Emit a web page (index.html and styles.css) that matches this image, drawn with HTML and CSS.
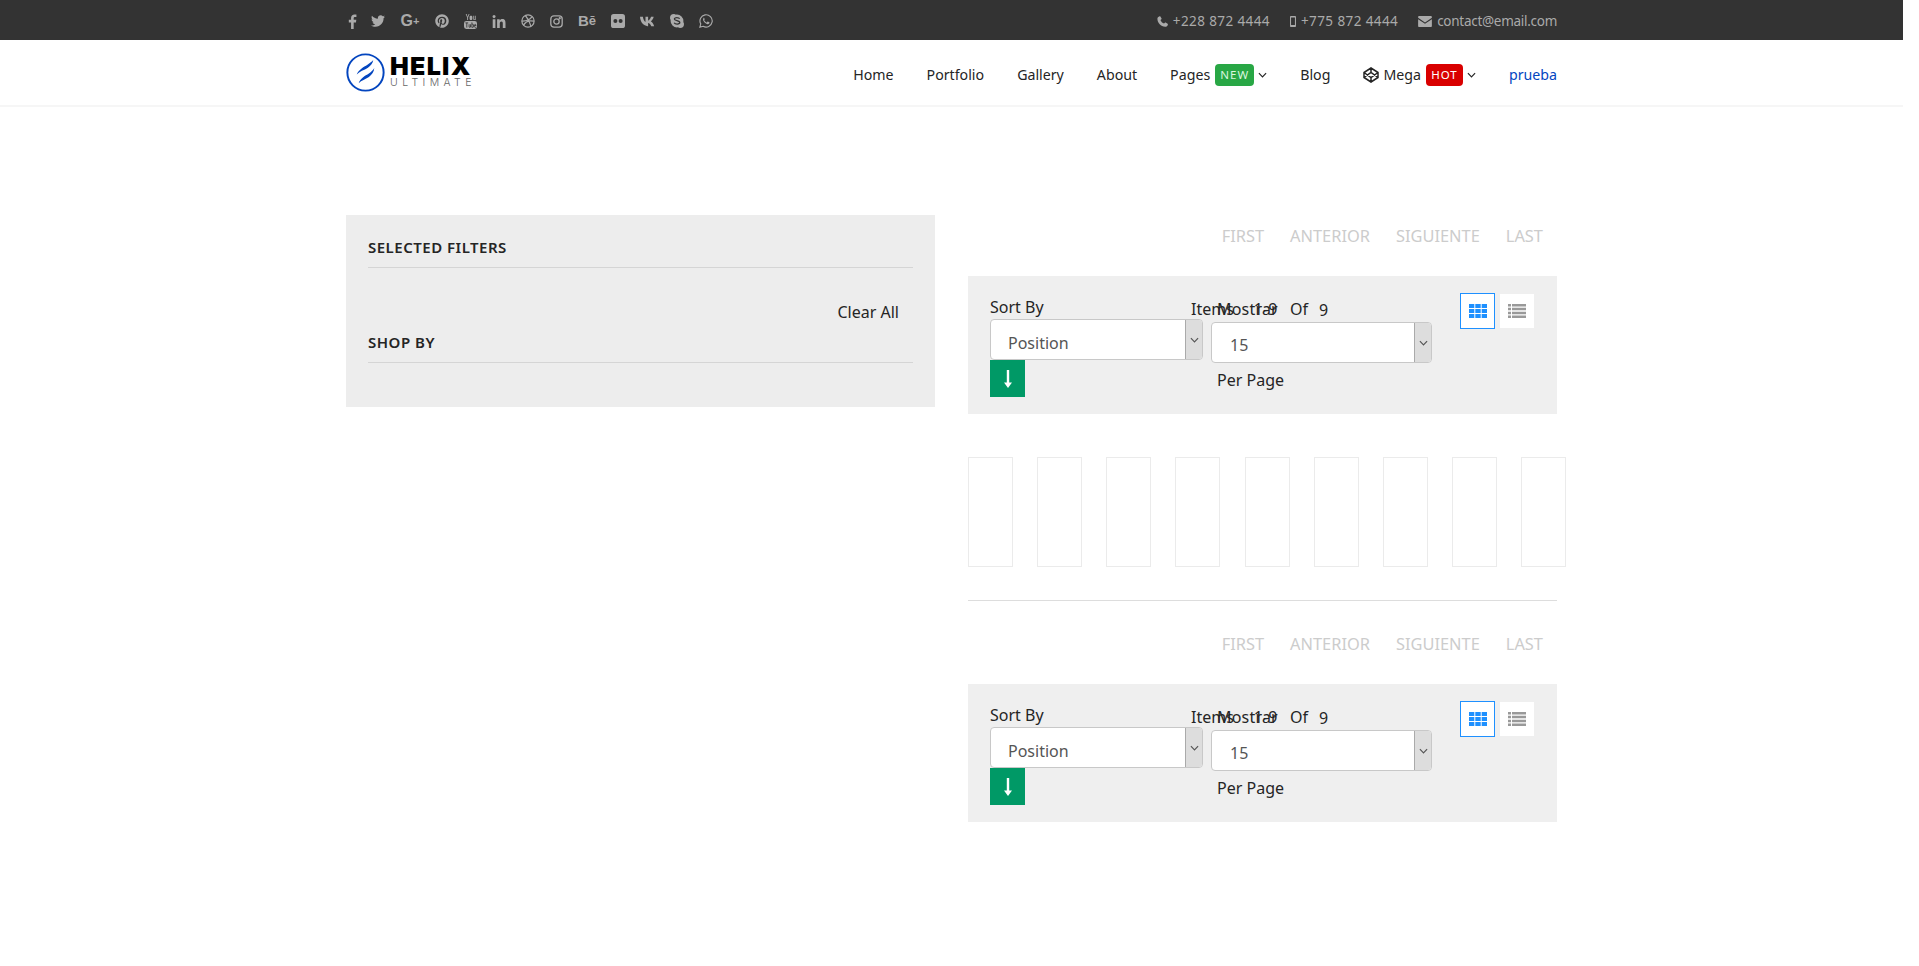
FILE: index.html
```html
<!DOCTYPE html>
<html lang="en">
<head>
<meta charset="utf-8">
<title>Helix Ultimate</title>
<link rel="stylesheet" href="styles.css">
</head>
<body>
<svg class="defs" width="0" height="0" aria-hidden="true">
  <symbol id="chev" viewBox="0 0 10 6"><path d="M1 1l4 4 4-4" fill="none" stroke="currentColor" stroke-width="1.3"/></symbol>
  <symbol id="grid" viewBox="0 0 18 14"><path fill="#1e90ff" d="M0 0h5.300v4H0zM6.300 0h5.400v4H6.300zM12.700 0H18v4h-5.300zM0 5h5.300v4H0zM6.300 5h5.400v4H6.300zM12.700 5H18v4h-5.300zM0 10h5.300v4H0zM6.300 10h5.400v4H6.300zM12.700 10H18v4h-5.300z"/></symbol>
  <symbol id="list" viewBox="0 0 18 14"><path fill="#999" d="M0 0h3v2.500H0zM4 0h14v2.500H4zM0 3.800h3v2.500H0zM4 3.800h14v2.500H4zM0 7.700h3v2.500H0zM4 7.700h14v2.500H4zM0 11.500h3V14H0zM4 11.500h14V14H4z"/></symbol>
  <symbol id="down" viewBox="0 0 10 18"><path fill="#fff" d="M3.800 0h2.400v12.500H9L5 18 1 12.500h2.800z"/></symbol>
</svg>

<div class="page">
  <div class="topbar">
    <div class="wrap topbar-in">
      <ul class="social">
        <li class="s-f"><svg viewBox="0 0 16 16"><path fill="currentColor" d="M9.800 16V9h2.400l.4-2.800H9.800V4.500c0-.8.2-1.400 1.400-1.400h1.500V.6C12.400.6 11.600.5 10.600.5 8.500.5 7 1.800 7 4.200v2H4.600V9H7v7z"/></svg></li>
        <li class="s-t"><svg viewBox="0 0 512 512"><path fill="currentColor" d="M459.370 151.716c.325 4.548.325 9.097.325 13.645 0 138.720-105.583 298.558-298.558 298.558-59.452 0-114.680-17.219-161.137-47.106 8.447.974 16.568 1.299 25.340 1.299 49.055 0 94.213-16.568 130.274-44.832-46.132-.975-84.792-31.188-98.112-72.772 6.498.974 12.995 1.624 19.818 1.624 9.421 0 18.843-1.300 27.614-3.573-48.081-9.747-84.143-51.980-84.143-102.985v-1.299c13.969 7.797 30.214 12.670 47.431 13.319-28.264-18.843-46.781-51.005-46.781-87.391 0-19.492 5.197-37.360 14.294-52.954 51.655 63.675 129.300 105.258 216.365 109.807-1.624-7.797-2.599-15.918-2.599-24.040 0-57.828 46.782-104.934 104.934-104.934 30.213 0 57.502 12.670 76.670 33.137 23.715-4.548 46.456-13.320 66.599-25.340-7.798 24.366-24.366 44.833-46.132 57.827 21.117-2.273 41.584-8.122 60.426-16.243-14.292 20.791-32.161 39.308-52.628 54.253z"/></svg></li>
        <li class="s-g">G<span class="plus">+</span></li>
        <li class="s-p"><svg viewBox="0 0 496 512"><path fill="currentColor" d="M496 256c0 137-111 248-248 248-25.600 0-50.200-3.900-73.400-11.100 10.100-16.500 25.200-43.500 30.800-65 3-11.600 15.400-59 15.400-59 8.100 15.400 31.700 28.500 56.800 28.500 74.800 0 128.700-68.800 128.700-154.300 0-81.900-66.900-143.200-152.900-143.200-107 0-163.900 71.800-163.900 150.100 0 36.400 19.400 81.700 50.300 96.100 4.700 2.200 7.200 1.200 8.300-3.300.8-3.400 5-20.300 6.900-28.100.6-2.500.3-4.700-1.700-7.100-10.100-12.500-18.300-35.300-18.300-56.600 0-54.700 41.400-107.600 112-107.600 60.900 0 103.600 41.500 103.600 100.900 0 67.100-33.900 113.600-78 113.600-24.300 0-42.600-20.100-36.700-44.800 7-29.500 20.500-61.300 20.500-82.600 0-19-10.200-34.900-31.400-34.900-24.900 0-44.900 25.700-44.900 60.200 0 22 7.400 36.800 7.400 36.800s-24.500 103.800-29 123.200c-5 21.400-3 51.600-.9 71.200C65.400 450.900 0 361.100 0 256 0 119 111 8 248 8s248 111 248 248z"/></svg></li>
        <li class="s-y"><svg viewBox="0 0 14 16"><path fill="currentColor" d="M2.500 7.500h9A2.500 2.500 0 0 1 14 10v3.500a2.500 2.500 0 0 1-2.500 2.500h-9A2.500 2.500 0 0 1 0 13.500V10a2.500 2.500 0 0 1 2.500-2.500zM2.800 0l1.100 2.900L5 0h1L4.400 3.800v2.600h-1V3.800L1.800 0zM7.500 1.700c1 0 1.500.5 1.500 1.400v1.900c0 .9-.5 1.400-1.500 1.400S6 5.900 6 5V3.100c0-.9.5-1.400 1.500-1.400zM10 1.800h.9v3.500c0 .3.300.3.800-.1V1.800h.9v4.600h-.9v-.5c-.9.9-1.700.7-1.700-.3z"/><path stroke="#333" stroke-width=".9" fill="none" d="M1.500 9.500h3M3 9.500V14.500M5.500 11v3c.4.500 1.300.5 1.500 0V11M8.500 9v5.500M8.500 11.200c.9-.6 1.700-.3 1.700.5v2c0 .7-.8.900-1.700.3M11.200 12.300h1.800c0-1.600-1.800-1.600-1.800 0v1c0 1.300 1.300 1.300 1.800.5"/></svg></li>
        <li class="s-l"><svg viewBox="0 0 448 448"><path fill="currentColor" d="M100.280 448H7.400V148.900h92.880zM53.790 108.100C24.090 108.100 0 83.500 0 53.800a53.790 53.790 0 0 1 107.580 0c0 29.700-24.100 54.300-53.790 54.300zM447.900 448h-92.680V302.400c0-34.700-.7-79.200-48.290-79.200-48.290 0-55.690 37.700-55.690 76.700V448h-92.780V148.900h89.080v40.800h1.300c12.400-23.500 42.690-48.300 87.880-48.300 94 0 111.280 61.900 111.280 142.300V448z"/></svg></li>
        <li class="s-d"><svg viewBox="0 0 16 16" fill="none" stroke="currentColor" stroke-width="1.400"><circle cx="8" cy="8" r="7"/><path d="M5 1.700c3 3.500 5.500 8 6.500 12.700M1 8c4.500.2 8.500-1 11.500-4.700M2.800 13c2-4 6.500-6 12-4.800"/></svg></li>
        <li class="s-i"><svg viewBox="0 0 16 16" fill="none" stroke="currentColor" stroke-width="1.600"><rect x="1" y="1" width="14" height="14" rx="3.800"/><circle cx="8" cy="8" r="3.300"/><circle cx="12" cy="4" r=".6" fill="currentColor"/></svg></li>
        <li class="s-b">B<span class="be">ē</span></li>
        <li class="s-k"><svg viewBox="0 0 16 16"><rect width="16" height="16" rx="3" fill="currentColor"/><circle cx="5" cy="8" r="2.300" fill="#333"/><circle cx="11" cy="8" r="2.300" fill="#333"/></svg></li>
        <li class="s-v"><svg viewBox="0 0 18 11"><path fill="currentColor" d="M0 .6h3.100c.2 2.400 1.500 5 2.700 5.500V.6h2.800v4c1.300-.2 2.500-2 3.100-4h2.800c-.4 2.300-1.900 4-3 4.800 1.100.6 2.800 2.100 3.500 5h-3.100c-.6-1.900-2-3.200-3.300-3.400v3.400h-.6C4 10.400.3 6.600 0 .6z"/></svg></li>
        <li class="s-s"><svg viewBox="0 0 16 16"><path fill="currentColor" fill-rule="evenodd" d="M4.500 0C5.400 0 6.200.3 6.800.8 7.200.7 7.600.7 8 .7A7.300 7.300 0 0 1 15.300 8c0 .4 0 .8-.1 1.200.5.600.8 1.400.8 2.300A4.500 4.500 0 0 1 11.500 16c-.9 0-1.700-.3-2.300-.8-.4.1-.8.100-1.200.1A7.300 7.300 0 0 1 .7 8c0-.4 0-.8.1-1.200C.3 6.200 0 5.400 0 4.500A4.500 4.500 0 0 1 4.500 0z"/><path fill="none" stroke="#333" stroke-width="1.500" d="M11 5.500C10.300 3.900 5 3.600 5 5.800c0 2.200 6.200 1.400 6.200 4 0 2.300-5.500 2.200-6.400.3"/></svg></li>
        <li class="s-w"><svg viewBox="0 0 16 16"><path fill="none" stroke="currentColor" stroke-width="1.300" d="M1 15l1-3.700A7 7 0 1 1 4.700 14z"/><path fill="currentColor" d="M5.800 4.200c-.7.300-1.300 1.100-1.200 2.100.2 2.200 2.900 5.100 5.300 5.300 1 .1 1.900-.6 2-1.300.1-.4.100-.7 0-.8l-1.800-.9c-.2-.1-.3 0-.5.200l-.6.800c-.2.100-.3.100-.5 0-1.100-.5-2-1.300-2.600-2.400-.1-.2 0-.3.100-.4l.5-.7v-.4l-.8-1.400c-.2-.2-.4-.2-.7-.1z"/></svg></li>
      </ul>
      <ul class="contact">
        <li class="tel"><svg class="c-phone" viewBox="0 0 14 14"><path fill="currentColor" d="M3.300.3c.4-.2.800-.1 1 .3l1.500 2.500c.2.400.1.800-.2 1L4.400 5c.6 1.800 2.600 3.900 4.600 4.700l1-1.200c.3-.3.700-.3 1-.1l2.500 1.600c.4.200.5.600.3 1-.6 1.700-1.800 2.900-3.400 2.800C5 13.400.5 8.700.5 3.500.5 2 1.600.9 3.300.3z"/></svg>+228 872 4444</li>
        <li class="tel"><svg class="c-mobile" viewBox="0 0 7 13"><path fill="currentColor" fill-rule="evenodd" d="M1.200 0h4.600C6.500 0 7 .5 7 1.200v10.600c0 .7-.5 1.200-1.200 1.200H1.200C.5 13 0 12.500 0 11.800V1.200C0 .5.500 0 1.200 0zM1.200 1.800v8.900h4.600V1.800z"/></svg>+775 872 4444</li>
        <li class="mail"><svg class="c-mail" viewBox="0 0 15 12"><path fill="currentColor" d="M1.200 0h12.600c.7 0 1.200.5 1.200 1.200v.6L7.500 7 0 1.800v-.6C0 .5.500 0 1.200 0zM0 3.500l7.500 5 7.500-5v7.300c0 .7-.5 1.200-1.200 1.200H1.200C.5 12 0 11.500 0 10.800z"/></svg>contact@email.com</li>
      </ul>
    </div>
  </div>

  <header class="header">
    <div class="wrap header-in">
      <a class="logo">
        <svg class="logo-mark" viewBox="0 0 40 40"><circle cx="20" cy="20" r="18.600" fill="none" stroke="#0345bf" stroke-width="2"/><path fill="#0345bf" d="M11 22c2-5 7-7.500 11-10 3-1.800 5-3.500 6-5-.5 3.500-2.500 6-5.500 8-4 2.600-8.500 3.500-11.500 7zM13 31c1.500-5 6.500-7.500 10.500-10 2.500-1.600 4.500-3.500 5.500-5.500-.3 3.800-2.300 6.800-5.500 9-3.700 2.500-7.500 3.300-10.500 6.500z"/></svg>
        <span class="logo-text"><span class="logo-top">HELIX</span><span class="logo-sub">ULTIMATE</span></span>
      </a>
      <nav class="nav">
        <a class="nav-home">Home</a>
        <a class="nav-port">Portfolio</a>
        <a class="nav-gal">Gallery</a>
        <a class="nav-about">About</a>
        <a class="nav-pages">Pages<span class="badge badge-new">NEW</span><svg class="nav-chev"><use href="#chev"/></svg></a>
        <a class="nav-blog">Blog</a>
        <a class="nav-mega"><svg class="cube" viewBox="0 0 16 16" fill="none" stroke="currentColor" stroke-width="1.500"><path d="M8 1l7 4.500v5L8 15l-7-4.500v-5zM8 1v4.500M8 10.500V15M1 5.500L8 10.500l7-5M1 10.500l7-5 7 5"/></svg>Mega<span class="badge badge-hot">HOT</span><svg class="nav-chev"><use href="#chev"/></svg></a>
        <a class="nav-link">prueba</a>
      </nav>
    </div>
  </header>

  <main class="wrap content">
    <aside class="sidebar">
      <h3 class="side-title">SELECTED FILTERS</h3>
      <div class="clear-row"><a>Clear All</a></div>
      <h3 class="side-title side-shop">SHOP BY</h3>
    </aside>

    <section class="products">
      <div class="pager"><a>FIRST</a><a>ANTERIOR</a><a>SIGUIENTE</a><a>LAST</a></div>
      <div class="toolbar">
        <div class="sorter">
          <label class="lab">Sort By</label>
          <div class="sel"><select><option>Position</option></select><span class="sel-arrow"><svg><use href="#chev"/></svg></span></div>
          <a class="dir"><svg><use href="#down"/></svg></a>
        </div>
        <div class="limiter">
          <p class="amount"><span>Items</span><span class="am-range">1-9</span><span class="am-of">Of</span><span class="am-total">9</span></p>
          <label class="lab lab-show">Mostrar</label>
          <div class="sel sel-wide"><select><option>15</option></select><span class="sel-arrow"><svg><use href="#chev"/></svg></span></div>
          <span class="lab lab-per">Per Page</span>
        </div>
        <div class="modes">
          <a class="mode mode-on"><svg><use href="#grid"/></svg></a>
          <a class="mode"><svg><use href="#list"/></svg></a>
        </div>
      </div>

      <div class="cards">
        <div class="card"></div><div class="card"></div><div class="card"></div>
        <div class="card"></div><div class="card"></div><div class="card"></div>
        <div class="card"></div><div class="card"></div><div class="card"></div>
      </div>
      <hr class="rule">

      <div class="pager"><a>FIRST</a><a>ANTERIOR</a><a>SIGUIENTE</a><a>LAST</a></div>
      <div class="toolbar">
        <div class="sorter">
          <label class="lab">Sort By</label>
          <div class="sel"><select><option>Position</option></select><span class="sel-arrow"><svg><use href="#chev"/></svg></span></div>
          <a class="dir"><svg><use href="#down"/></svg></a>
        </div>
        <div class="limiter">
          <p class="amount"><span>Items</span><span class="am-range">1-9</span><span class="am-of">Of</span><span class="am-total">9</span></p>
          <label class="lab lab-show">Mostrar</label>
          <div class="sel sel-wide"><select><option>15</option></select><span class="sel-arrow"><svg><use href="#chev"/></svg></span></div>
          <span class="lab lab-per">Per Page</span>
        </div>
        <div class="modes">
          <a class="mode mode-on"><svg><use href="#grid"/></svg></a>
          <a class="mode"><svg><use href="#list"/></svg></a>
        </div>
      </div>
    </section>
  </main>
</div>
</body>
</html>
```
FILE: styles.css
```css
* { box-sizing: border-box; }
html, body { margin: 0; padding: 0; background: #fff; }
body { font-family: "Noto Sans", "Open Sans", sans-serif; color: #252525; font-size: 15px; overflow: hidden; }
.defs { position: absolute; }
ul { list-style: none; margin: 0; padding: 0; }
a { color: inherit; text-decoration: none; }
.page { width: 1903px; height: 966px; }
.wrap { width: 1211px; margin: 0 auto; }

/* top bar */
.topbar { background: #333; height: 40px; color: #aaa; }
.topbar-in { height: 40px; display: flex; justify-content: space-between; align-items: center; }
.social { display: flex; align-items: center; gap: 15px; padding: 2px 0 0 2px; }
.social li { display: flex; align-items: center; justify-content: center; height: 16px; }
.social svg { display: block; }
.s-f { width: 8px; } .s-f svg { width: 16px; height: 15px; flex: none; }
.s-t { width: 14px; } .s-t svg { width: 14px; height: 14px; }
.s-g { width: 20px; font: 700 16px/16px "Liberation Sans", sans-serif; }
.plus { font-size: 11px; }
.s-p { width: 14px; } .s-p svg { width: 14px; height: 14px; }
.s-y { width: 13px; } .s-y svg { width: 13px; height: 15px; }
.s-l { width: 14px; } .s-l svg { width: 14px; height: 13px; }
.s-d { width: 14px; } .s-d svg { width: 14px; height: 14px; }
.s-i { width: 13px; } .s-i svg { width: 13px; height: 13px; }
.s-b { width: 18px; font: 700 15px/16px "Liberation Sans", sans-serif; white-space: nowrap; }
.be { font-size: 13px; }
.s-k { width: 14px; } .s-k svg { width: 14px; height: 14px; }
.s-v { width: 17px; } .s-v svg { width: 17px; height: 11px; }
.s-s { width: 13px; margin-left: -2px; } .s-s svg { width: 14px; height: 14px; flex: none; }
.s-w { width: 14px; margin-left: 1px; } .s-w svg { width: 14px; height: 14px; }
.contact { display: flex; gap: 20px; font-size: 13.500px; padding-top: 2px; }
.contact li { display: flex; align-items: center; gap: 5px; white-space: nowrap; }
.tel { letter-spacing: .4px; }
.mail { letter-spacing: -.28px; }
.c-phone { width: 11px; height: 11px; }
.c-mobile { width: 6px; height: 11px; }
.c-mail { width: 14px; height: 11px; }

/* header */
.header { height: 67px; background: #fff; border-bottom: 2px solid #f6f6f6; }
.header-in { height: 65px; display: flex; justify-content: space-between; align-items: center; }
.logo { display: flex; align-items: center; gap: 5px; }
.logo-mark { width: 39px; height: 39px; }
.logo-text { display: flex; flex-direction: column; padding-bottom: 1px; }
.logo-top { font: 900 25px/21px Inter, sans-serif; color: #000; letter-spacing: 1.300px; }
.logo-sub { font: 300 10.500px/11px Inter, sans-serif; color: #666; letter-spacing: 4.400px; }
.nav { display: flex; align-items: center; gap: 33px; font-size: 14.200px; margin-top: 4px; }
.nav a { display: flex; align-items: center; white-space: nowrap; }
.badge { display: inline-block; height: 22px; line-height: 22px; border-radius: 4px; color: #fff; font-size: 11.500px; letter-spacing: 1px; text-align: center; margin-left: 5px; }
.badge-new { width: 39px; background: #28a745; color: #d9f6df; }
.badge-hot { width: 37px; background: #d90000; }
.nav-chev { width: 9px; height: 6px; margin-left: 4px; }
.cube { width: 16px; height: 16px; margin-right: 4px; }
.nav-link { color: #0345bf; }

/* content */
.content { display: flex; gap: 33px; padding-top: 108px; align-items: flex-start; }
.sidebar { width: 589px; height: 192px; background: #ededed; padding: 22px 22px 0; }
.side-title { margin: 0; font-size: 15px; font-weight: 600; letter-spacing: .5px; line-height: 20px; padding-bottom: 10px; border-bottom: 1px solid #d5d5d5; }
.clear-row { display: flex; justify-content: flex-end; padding: 33px 14px 0 0; font-size: 16px; line-height: 22px; }
.side-shop { margin-top: 9px; }

.products { width: 589px; }
.pager { display: flex; justify-content: flex-end; gap: 26px; height: 61px; padding: 9px 14px 0 0; font-size: 16.400px; line-height: 24px; color: #ccc; }
.toolbar { height: 138px; background: #efefef; padding: 0 0 0 22px; display: flex; align-items: flex-start; }
.lab { display: block; font-size: 16px; line-height: 22px; color: #252525; }
.sorter { width: 213px; padding-top: 20px; }
.sorter .lab { margin-bottom: 1px; }
.sel { position: relative; height: 41px; background: #fff; border: 1px solid #c8c8c8; border-radius: 4px; overflow: hidden; }
.sel select { display: block; width: 100%; height: 100%; border: 0; background: transparent; appearance: none; padding: 6px 0 0 17px; font: 16px "Noto Sans", sans-serif; color: #555; }
.sel-arrow { position: absolute; top: 0; right: 0; bottom: 0; width: 17px; background: #ddd; border-left: 1px solid #aaa; display: flex; align-items: center; justify-content: center; color: #555; }
.sel-arrow svg { width: 9px; height: 6px; }
.sel-wide select { padding-top: 4px; padding-left: 18px; }
.dir { display: flex; align-items: center; justify-content: center; width: 35px; height: 37px; background: #009966; }
.dir svg { width: 10px; height: 18px; }
.limiter { position: relative; width: 221px; margin-left: 8px; padding-top: 22px; }
.lab-show { padding-left: 6px; margin-bottom: 2px; letter-spacing: .2px; }
.lab-per { margin-top: 6px; padding-left: 6px; }
.amount { position: absolute; left: -20px; top: 22px; margin: 0; display: flex; font-size: 16px; line-height: 22px; white-space: nowrap; }
.am-range { margin-left: 20px; }
.am-of { position: absolute; left: 99px; }
.am-total { position: absolute; left: 128px; top: 1px; }
.modes { display: flex; gap: 5px; margin: 18px 0 0 28px; }
.mode { display: flex; align-items: center; justify-content: center; width: 34px; height: 34px; background: #fff; }
.mode svg { width: 18px; height: 14px; }
.mode-on { width: 35px; height: 36px; margin-top: -1px; border: 1px solid #1e90ff; }

.cards { display: flex; gap: 24.125px; margin-top: 43px; width: 598px; }
.card { flex: none; width: 45px; height: 110px; border: 1px solid #ebebeb; }
.rule { margin: 33px 0 0; border: 0; border-top: 1px solid #ddd; height: 23px; }
```
